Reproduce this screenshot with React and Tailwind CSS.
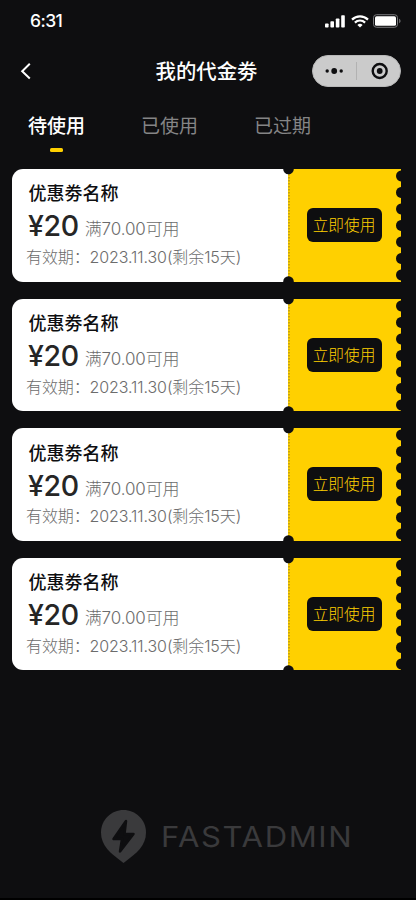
import clsx from "clsx";

const tabs = [
  { key: "unused", label: "待使用" },
  { key: "used", label: "已使用" },
  { key: "expired", label: "已过期" },
];

const coupons = [
  { id: 1, name: "优惠劵名称", amount: 20, limit: "满70.00可用", date: "2023.11.30", remain: "(剩余15天)" },
  { id: 2, name: "优惠劵名称", amount: 20, limit: "满70.00可用", date: "2023.11.30", remain: "(剩余15天)" },
  { id: 3, name: "优惠劵名称", amount: 20, limit: "满70.00可用", date: "2023.11.30", remain: "(剩余15天)" },
  { id: 4, name: "优惠劵名称", amount: 20, limit: "满70.00可用", date: "2023.11.30", remain: "(剩余15天)" },
];

function StatusBar() {
  return (
    <div className="flex h-[42px] items-center justify-between pr-[15px] pl-[30px]">
      <span className="pt-px text-[17.5px] font-medium tracking-[-0.6px]">6:31</span>
      <div className="flex items-center">
        <svg width="20" height="13" viewBox="0 0 20 13" fill="currentColor">
          <rect x="0" y="8.5" width="3.6" height="4" rx="0.8" />
          <rect x="5.4" y="6.2" width="3.6" height="6.3" rx="0.8" />
          <rect x="10.8" y="3.5" width="3.6" height="9" rx="0.8" />
          <rect x="16.2" y="0.3" width="3.6" height="12.2" rx="0.8" />
        </svg>
        <svg className="ml-[6px]" width="18" height="13" viewBox="0 0 18 13" fill="none" stroke="currentColor" strokeWidth="2.2">
          <path d="M1 4.6a11.3 11.3 0 0 1 16 0" />
          <path d="M3.9 7.6a7.2 7.2 0 0 1 10.2 0" />
          <path d="M9 12.6 6.4 10a3.7 3.7 0 0 1 5.2 0z" fill="currentColor" stroke="none" />
        </svg>
        <svg className="ml-[4px]" width="28" height="14" viewBox="0 0 28 14">
          <rect x="0.5" y="0.7" width="24" height="12.6" rx="3" fill="none" stroke="#77777a" />
          <rect x="2" y="2.2" width="21" height="9.6" rx="1.6" fill="#fff" />
          <path d="M26.2 4.8v4.4c.9-.4 1.3-1.2 1.3-2.2s-.4-1.8-1.3-2.2z" fill="#77777a" />
        </svg>
      </div>
    </div>
  );
}

function NavBar() {
  return (
    <div className="grid h-[58px] grid-cols-[1fr_auto_1fr] items-center pr-[16px] pl-[20px]">
      <svg width="12" height="18" viewBox="0 0 12 18" fill="none" stroke="currentColor" strokeWidth="2">
        <path d="M9.8 1.8 2.2 9.2l7.6 7.2" />
      </svg>
      <h1 className="-ml-[7px] pt-[2px] text-[20.4px] leading-none font-medium">我的代金劵</h1>
      <div className="-mr-px flex h-8 w-[89px] items-center justify-self-end rounded-full border border-[#b8b8b8] bg-[#cbcbcb] text-[#0e0e10]">
        <svg width="87" height="30" viewBox="0 0 87 30" fill="currentColor">
          <circle cx="14.2" cy="15" r="1.7" />
          <circle cx="21.2" cy="15" r="2.9" />
          <circle cx="28.2" cy="15" r="1.7" />
          <path d="M43.5 6v18" stroke="#b2b2b2" />
          <circle cx="66.7" cy="15" r="7" fill="none" stroke="currentColor" strokeWidth="2.4" />
          <circle cx="66.7" cy="15" r="2.9" />
        </svg>
      </div>
    </div>
  );
}

function Tabs({ active }) {
  return (
    <div className="flex h-[69px] gap-14 pt-[17px] pl-[28px]">
      {tabs.map((tab) => (
        <div key={tab.key} className="flex flex-col items-center">
          <span className={clsx("text-[19px] leading-[20px]", tab.key === active ? "font-medium text-white" : "text-[#858586]")}>
            {tab.label}
          </span>
          {tab.key === active ? <i className="mt-[11px] h-[4px] w-[13.5px] rounded-[1.5px] bg-[#ffd000]" /> : null}
        </div>
      ))}
    </div>
  );
}

function CouponCard({ coupon }) {
  return (
    <div className="relative flex h-[112.6px] overflow-hidden">
      <div className="w-[276.5px] rounded-l-[11px] bg-white pt-[15.4px] pl-[14.5px]">
        <h2 className="pl-[2.5px] text-[18px] leading-[20px] font-medium text-[#0e0e10]">{coupon.name}</h2>
        <div className="flex h-[34px] items-baseline pt-[5px] pl-[2px] leading-[34px] whitespace-nowrap">
          <span className="text-[28.5px] font-medium tracking-[-0.4px] text-[#262626]">¥{coupon.amount}</span>
          <span className="ml-[6px] -translate-y-px text-[17px] font-light tracking-[-0.1px] text-[#6c6c6c]">{coupon.limit}</span>
        </div>
        <p className="pt-[8.6px] text-[16px] leading-[20px] font-light tracking-[-0.1px] whitespace-nowrap text-[#6c6c6c]">
          有效期：{coupon.date}
          {coupon.remain}
        </p>
      </div>
      <div className="flex flex-1 items-center bg-[#ffd000] pl-[18.5px]">
        <button className="h-[34px] w-[75px] rounded-[6px] bg-[#0e0e10] pt-px text-[15.7px] leading-[34px] font-light whitespace-nowrap text-[#ffd000]">
          立即使用
        </button>
      </div>
      {/* tear line, plus the punched notches at its ends and down the right edge */}
      <svg className="absolute inset-0" width="390" height="113" viewBox="0 0 390 113" fill="#0e0e10">
        <path d="M277 5v103" stroke="#8f7a20" strokeWidth="1" strokeDasharray="1.5 1.5" />
        <circle cx="276.5" cy="0" r="5.3" />
        <circle cx="276.5" cy="112.6" r="5.3" />
        {[7, 23.5, 40, 56.5, 73, 89.5, 106].map((cy) => (
          <circle key={cy} cx="389.5" cy={cy} r="5.5" />
        ))}
      </svg>
    </div>
  );
}

function Brand() {
  return (
    <div className="flex items-center pl-[101px] text-[#3a3a3c]">
      <svg width="45" height="53" viewBox="0 0 45 53" fill="currentColor">
        <path d="M22.5 0C34.5 0 45 9.5 45 22.5c0 13-9 20.5-22.5 30.5C9 43 0 35.5 0 22.5 0 9.5 10.5 0 22.5 0z" />
        <path
          d="M25 11 12.5 29h8.5l-2 12.5L32.5 24h-9z"
          fill="#0e0e10"
          stroke="#0e0e10"
          strokeWidth="2.5"
          strokeLinejoin="round"
        />
      </svg>
      <span className="ml-[15px] origin-left scale-x-[1.09] pt-[2px] text-[28.5px] leading-none tracking-[1.45px]">FASTADMIN</span>
    </div>
  );
}

export default function App() {
  return (
    <div className="flex h-[900px] w-[416px] flex-col overflow-hidden border-b-2 border-black bg-[#0e0e10] font-['Inter','Noto_Sans_CJK_SC',sans-serif] text-white">
      <StatusBar />
      <NavBar />
      <Tabs active="unused" />
      <div className="flex flex-col gap-[17px] pr-[15px] pl-[11.5px]">
        {coupons.map((coupon) => (
          <CouponCard key={coupon.id} coupon={coupon} />
        ))}
      </div>
      <div className="mt-auto pb-[35px]">
        <Brand />
      </div>
    </div>
  );
}
